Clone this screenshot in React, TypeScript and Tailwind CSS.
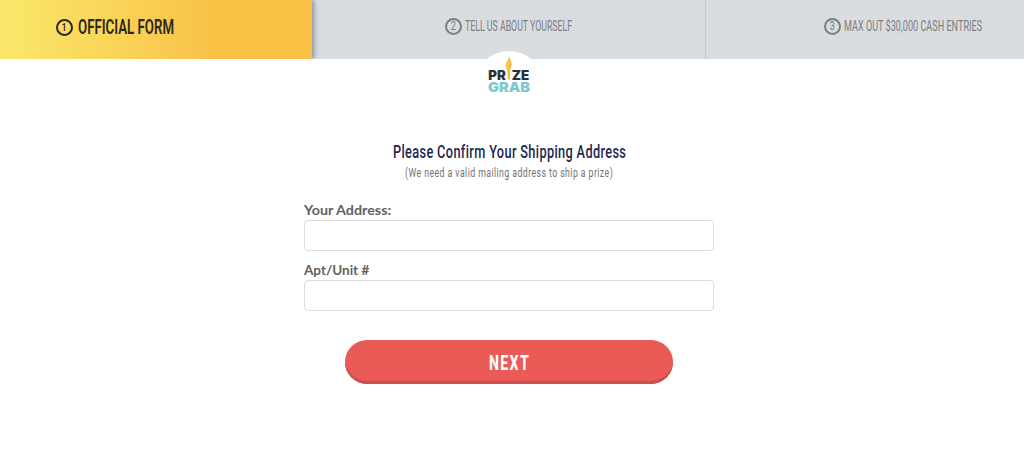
import { useLayoutEffect, useRef, useState } from 'react';
import { clsx } from 'clsx';

interface FitTextProps {
  children: string;
  className?: string;
}

// Squeezes a line of text horizontally into the width of its box
const FitText = ({ children, className }: FitTextProps) => {
  const boxRef = useRef<HTMLSpanElement>(null);
  const textRef = useRef<HTMLSpanElement>(null);
  const [scale, setScale] = useState(1);

  useLayoutEffect(() => {
    if (boxRef.current && textRef.current) {
      setScale(boxRef.current.clientWidth / textRef.current.offsetWidth);
    }
  }, [children]);

  return (
    <span ref={boxRef} className={clsx('block shrink-0 whitespace-nowrap', className)}>
      <span
        ref={textRef}
        className="inline-block origin-left"
        style={{ transform: `scaleX(${scale})` }}
      >
        {children}
      </span>
    </span>
  );
};

const StepNumber = ({ value, active }: { value: string; active?: boolean }) => (
  <span
    className={clsx(
      'flex h-[17px] w-[17px] shrink-0 items-center justify-center rounded-full border-2 leading-none',
      active ? 'border-[#2b2719] text-[11px] font-semibold' : 'border-[#7b7e81] text-[12px]'
    )}
  >
    <span className="scale-x-75">{value}</span>
  </span>
);

const Logo = () => (
  <svg
    viewBox="0 0 68 68"
    className="absolute top-[51px] left-[475px] h-[68px] w-[68px]"
    aria-label="Prize Grab"
  >
    <circle cx="34" cy="34" r="34" fill="#fff" />
    <g fontFamily="Inter, Lato, sans-serif" fontWeight="900">
      <text x="13.3" y="28.6" fontSize="12.6" fill="#2f3034" textLength="17.5" lengthAdjust="spacingAndGlyphs">
        PR
      </text>
      <text x="36.8" y="28.6" fontSize="12.6" fill="#2f3034" textLength="17.5" lengthAdjust="spacingAndGlyphs">
        ZE
      </text>
      <text x="13" y="40.6" fontSize="13.2" fill="#7fc8cd" textLength="42" lengthAdjust="spacingAndGlyphs">
        GRAB
      </text>
    </g>
    <path d="M34.3 5C35 9 37 11 36.6 14.2C36.4 16 35.4 17 35.3 19L34.9 28.5H33L32.2 19C31.4 17 30.4 15.5 31 12.8C31.5 10 34.2 8.5 34.3 5Z" fill="#f2bd3d" />
    <path d="M34.2 10C33 13 32.4 14.5 34 18.5" fill="none" stroke="#f8dc72" strokeWidth="0.8" />
  </svg>
);

const Field = ({ id, label, labelWidth }: { id: string; label: string; labelWidth: string }) => (
  <div>
    <label htmlFor={id} className="block h-5 font-[Lato,sans-serif] text-[13.5px] leading-5 font-bold text-[#626262]">
      <FitText className={labelWidth}>{label}</FitText>
    </label>
    <input
      id={id}
      type="text"
      className="block h-[31px] w-full rounded-[4px] border border-[#dcdcdc] bg-white px-3 text-sm outline-none"
    />
  </div>
);

const App = () => {
  return (
    <div className="relative h-[453px] w-[1024px] overflow-hidden bg-white font-[Roboto,sans-serif]">
      <header className="flex h-[59px] bg-[#d9dde0] text-[#7b7e81]">
        <div className="relative flex w-[312px] items-center bg-linear-to-r from-[#fae668] from-5% to-[#f8c146] to-70% pb-1 pl-14 text-[#2b2719] shadow-[2px_0_5px_rgba(60,65,80,0.5)] [clip-path:inset(0_-10px_0_0)]">
          <StepNumber value="1" active />
          <FitText className="ml-[5px] w-[96px] text-[19.5px] font-semibold">OFFICIAL FORM</FitText>
        </div>
        <div className="flex w-[394px] items-center border-r border-[#c4c7cb] pb-[7px] pl-[133px]">
          <StepNumber value="2" />
          <FitText className="ml-[3px] w-[107px] pt-px text-[14.2px] font-normal">TELL US ABOUT YOURSELF</FitText>
        </div>
        <div className="flex flex-1 items-center pb-[7px] pl-[118px]">
          <StepNumber value="3" />
          <FitText className="ml-[3px] w-[138px] pt-px text-[14.2px] font-normal">MAX OUT $30,000 CASH ENTRIES</FitText>
        </div>
      </header>
      <Logo />

      <main className="ml-[304px] w-[410px] pt-[81px]">
        <h1 className="flex justify-center text-[17.6px] leading-6 text-[#23264f]">
          <FitText className="w-[233px] font-medium tracking-[0.5px]">Please Confirm Your Shipping Address</FitText>
        </h1>
        <p className="flex justify-center text-[12.5px] leading-[18px] text-[#727272]">
          <FitText className="w-[208px] tracking-[0.6px]">(We need a valid mailing address to ship a prize)</FitText>
        </p>
        <form className="mt-[18px] flex flex-col gap-[9px]">
          <Field id="address" label="Your Address:" labelWidth="w-[87px]" />
          <Field id="apt" label="Apt/Unit #" labelWidth="w-[65px]" />
          <button
            type="button"
            className="mt-5 ml-[41px] flex h-11 w-[328px] items-center justify-center rounded-full bg-[#ea5a57] pt-[3px] text-[21px] font-extrabold text-white shadow-[inset_0_-3px_0_#cb4f4e]"
          >
            <FitText className="w-[41px] tracking-[2px]">NEXT</FitText>
          </button>
        </form>
      </main>
    </div>
  );
};

export default App;
